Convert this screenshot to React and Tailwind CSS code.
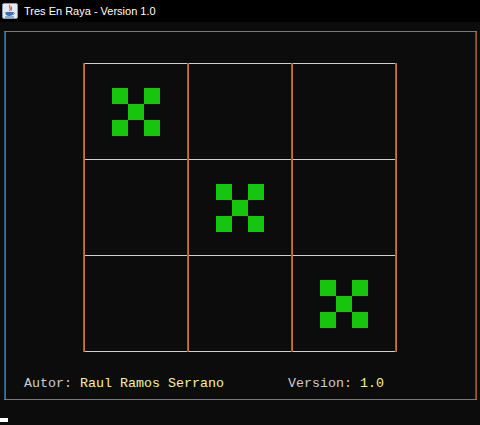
import React from "react";

function VLine({ dim }) {
  return dim ? (
    <div className="w-[2px] self-stretch border-l border-r border-l-[#2a5a82] border-r-[#9a5e2c]" />
  ) : (
    <div className="w-[2px] self-stretch border-l border-r border-l-[#3a78b0] border-r-[#c8783a]" />
  );
}

function Mark() {
  const on = [1, 0, 1, 0, 1, 0, 1, 0, 1];
  return (
    <div className="grid grid-cols-[16px_16px_16px] grid-rows-[16px_16px_16px]">
      {on.map((v, i) =>
        v ? <div key={i} className="bg-[#16c60c]" /> : <div key={i} />
      )}
    </div>
  );
}

function Cell({ x }) {
  return (
    <div className="w-[102px] h-[95px] flex items-center justify-center">
      {x ? <Mark /> : null}
    </div>
  );
}

function Column({ marks }) {
  return (
    <div className="flex flex-col">
      <div className="h-px bg-[#cfcfcf]" />
      <Cell x={marks[0]} />
      <div className="h-px bg-[#cfcfcf]" />
      <Cell x={marks[1]} />
      <div className="h-px bg-[#cfcfcf]" />
      <Cell x={marks[2]} />
      <div className="h-px bg-[#cfcfcf]" />
    </div>
  );
}

function JavaIcon() {
  return (
    <svg width="16" height="16" viewBox="0 0 16 16">
      <rect x="0.5" y="0.5" width="15" height="15" rx="1.5" fill="#e4eaf1" stroke="#8a9bb0" />
      <path d="M8 2 C6 4 10 5 7.5 8 M9.5 3.5 C8.5 5 10.5 5.5 9 7.5" stroke="#e8532a" strokeWidth="1.2" fill="none" />
      <path d="M3.5 9 H11 V10.5 C11 12 9.5 13 7.3 13 C5 13 3.5 12 3.5 10.5 Z" fill="#3d6fb0" />
      <path d="M11 9.6 C13 9.4 13 11.6 10.6 11.6" stroke="#3d6fb0" strokeWidth="1" fill="none" />
      <rect x="3" y="13.5" width="9" height="1" fill="#3d6fb0" />
    </svg>
  );
}

export default function App() {
  return (
    <div className="w-[480px] h-[425px] bg-[#0c0c0c] flex flex-col overflow-hidden">
      <div className="h-[22px] bg-black flex items-center pl-[2px] gap-[6px]">
        <JavaIcon />
        <span className="text-white text-[11px] leading-none font-['Segoe_UI','Liberation_Sans',sans-serif]">
          Tres En Raya - Version 1.0
        </span>
      </div>
      <div className="pt-[9px] pl-[4px] pr-[3px]">
        <div className="h-[369px] border-y border-[#7a7a7a] shadow-[inset_1px_0_0_#2a5a82,inset_2px_0_0_#9a5e2c,inset_-1px_0_0_#9a5e2c,inset_-2px_0_0_#2a5a82] flex flex-col">
          <div className="mt-[31px] ml-[79px] flex h-[289px]">
            <VLine />
            <Column marks={[1, 0, 0]} />
            <VLine />
            <Column marks={[0, 1, 0]} />
            <VLine />
            <Column marks={[0, 0, 1]} />
            <VLine />
          </div>
          <div className="mt-[24px] pl-[20px] h-[16px] leading-[16px] text-[13.33px] whitespace-pre font-['Liberation_Mono',monospace]">
            <span className="text-[#cccccc]">Autor: </span>
            <span className="text-[#f9f1a5]">Raul Ramos Serrano</span>
            <span className="text-[#cccccc]">        Version: </span>
            <span className="text-[#f9f1a5]">1.0</span>
          </div>
        </div>
      </div>
      <div className="mt-[18px] w-[8px] h-[4px] bg-white" />
    </div>
  );
}
